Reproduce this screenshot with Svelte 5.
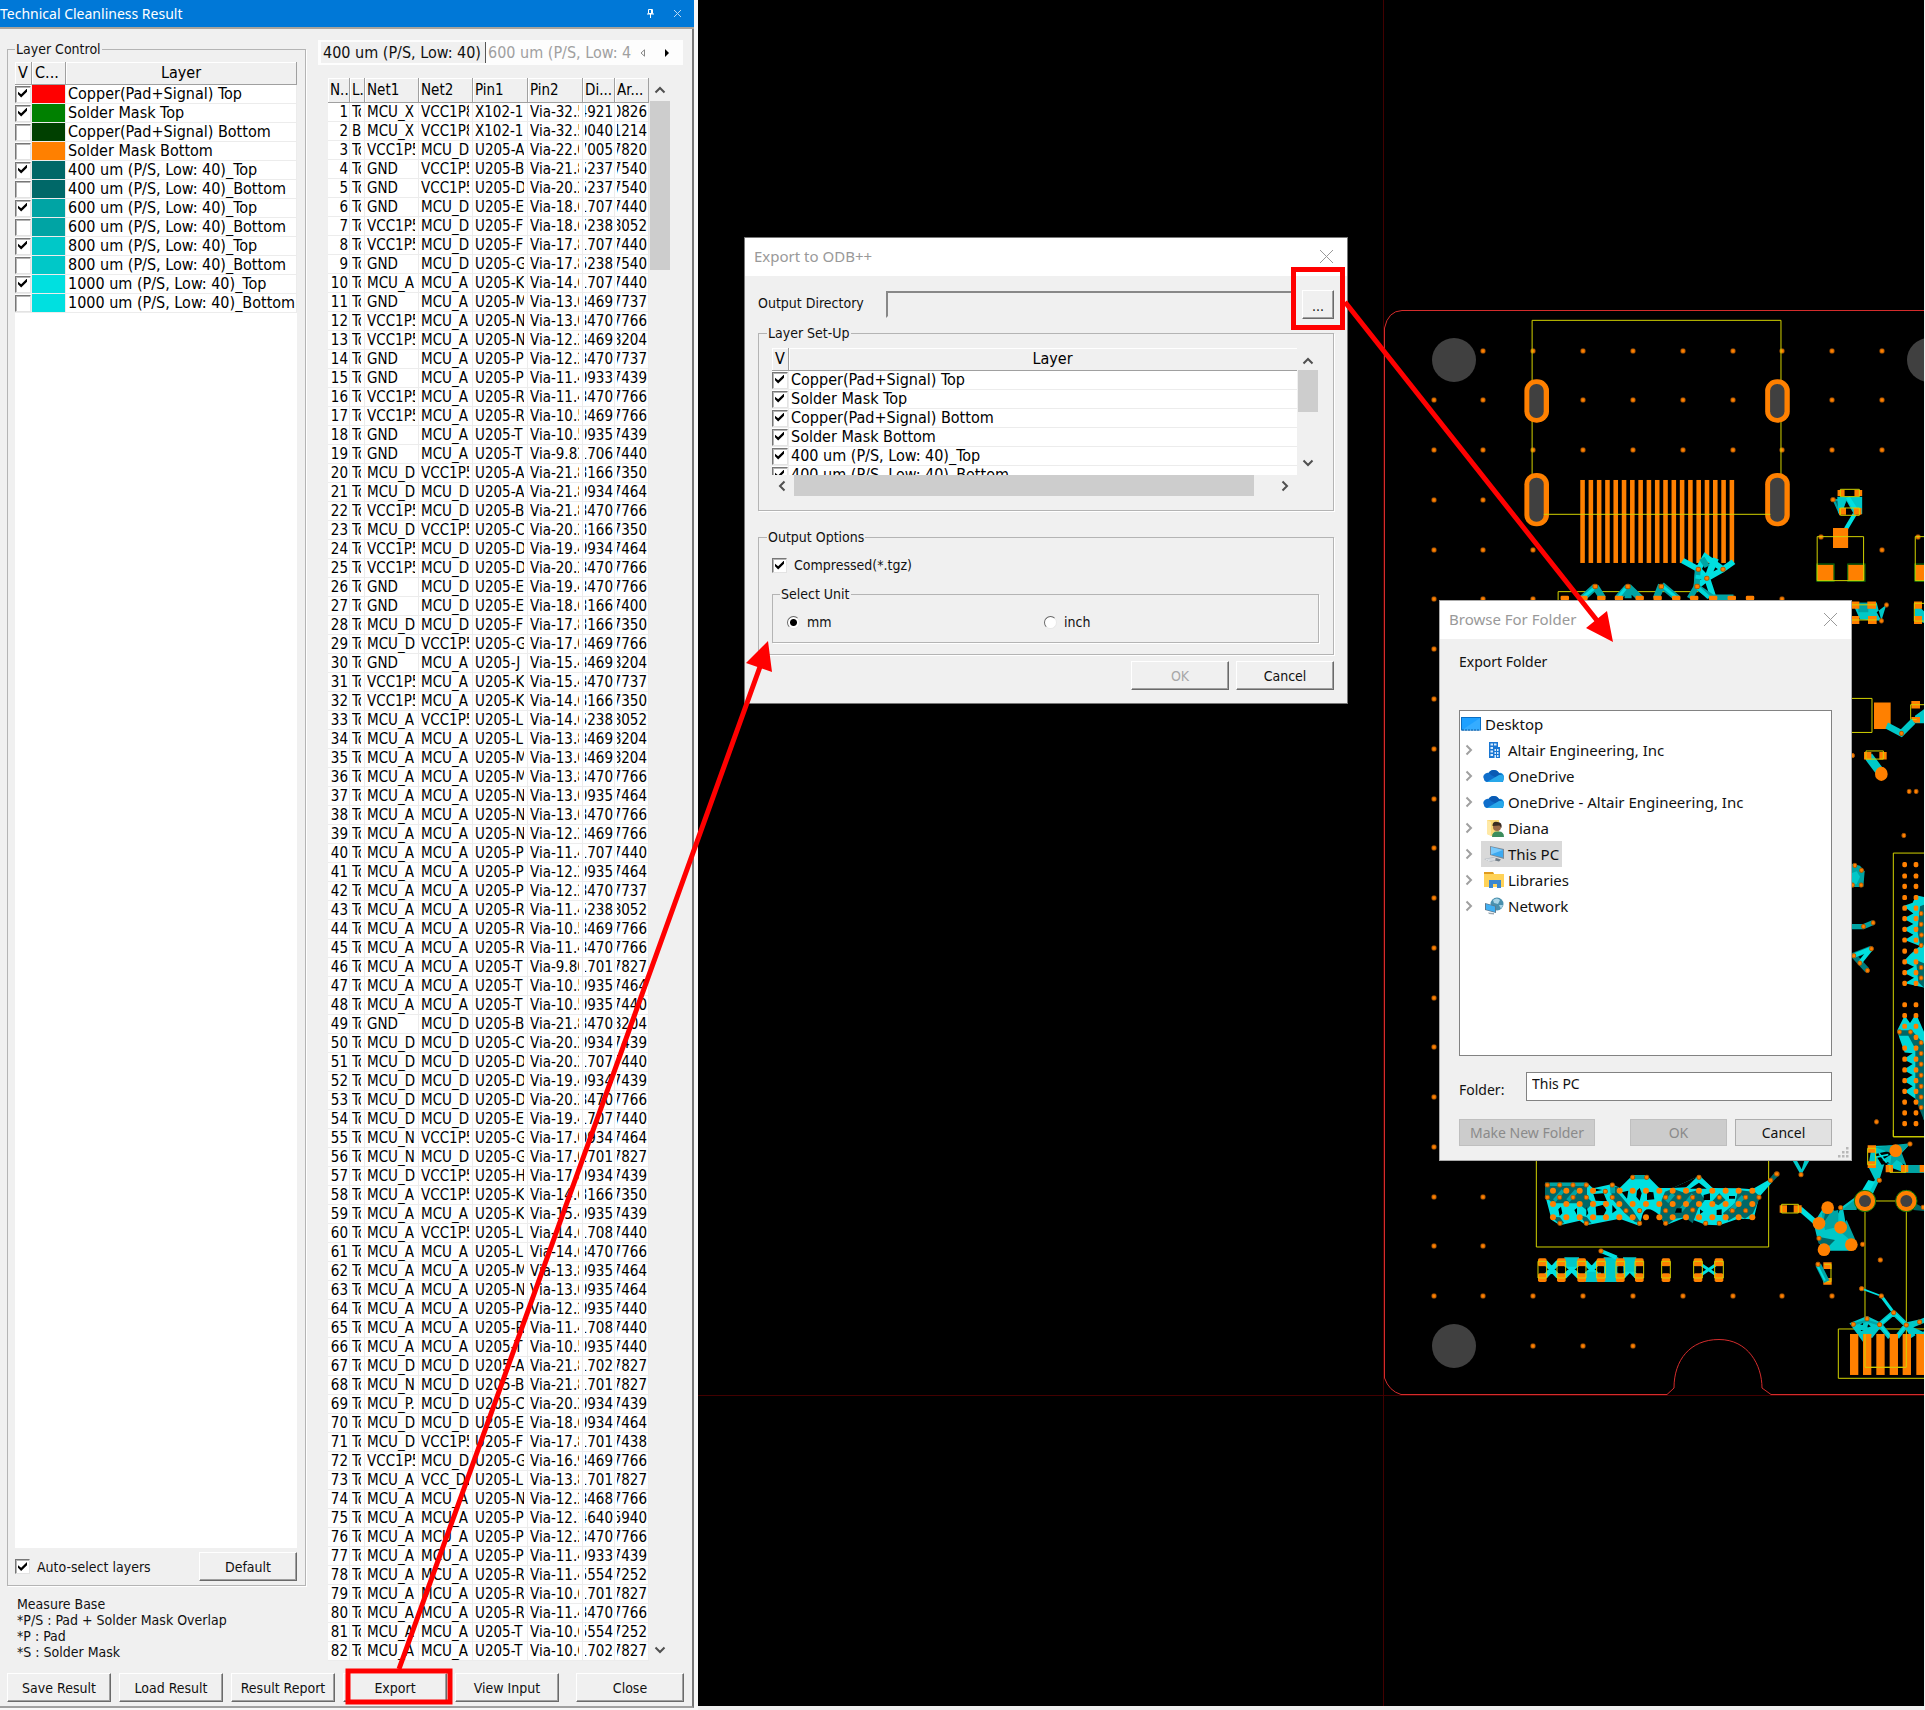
<script>
  const layers = [
    ['Copper(Pad+Signal) Top', '#ff0000', true],
    ['Solder Mask Top', '#008000', true],
    ['Copper(Pad+Signal) Bottom', '#004000', false],
    ['Solder Mask Bottom', '#ff8000', false],
    ['400 um (P/S, Low: 40)_Top', '#006868', true],
    ['400 um (P/S, Low: 40)_Bottom', '#006868', false],
    ['600 um (P/S, Low: 40)_Top', '#00a4a4', true],
    ['600 um (P/S, Low: 40)_Bottom', '#00a4a4', false],
    ['800 um (P/S, Low: 40)_Top', '#00c8c8', true],
    ['800 um (P/S, Low: 40)_Bottom', '#00c8c8', false],
    ['1000 um (P/S, Low: 40)_Top', '#00e0e0', true],
    ['1000 um (P/S, Low: 40)_Bottom', '#00e0e0', false]
  ];
  const exportLayers = layers.slice(0, 6).map((l) => l[0]);

  const nets = {
    X: 'MCU_X', A: 'MCU_A', D: 'MCU_D', N: 'MCU_N', P: 'MCU_P.',
    V: 'VCC1P5', W: 'VCC1P8', C: 'VCC_DD', G: 'GND'
  };
  // side, net1, net2, pin1, via x, distance, area
  const raw = `T X W X102-1 32.5 4921 0826|B X W X102-1 32.5 0040 1214|T V D A 22.0 7005 7820|T G V B 21.8 5237 7540
T G V D 20.2 5237 7540|T G D E 18.6 1707 7440|T V D F 18.6 5238 8052|T V D F 17.8 1707 7440|T G D G 17.8 5238 7540
T A A K 14.6 1707 7440|T G A M 13.0 3469 7737|T V A N 13.0 3470 7766|T V A N 12.2 3469 8204|T G A P 12.2 3470 7737
T G A P 11.4 0933 7439|T V A R 11.4 3470 7766|T V A R 10.5 3469 7766|T G A T 10.5 0935 7439|T G A T 9.82 1706 7440
T D V A 21.8 3166 7350|T D D A 21.8 0934 7464|T V D B 21.8 3470 7766|T D V C 20.2 3166 7350|T V D D 19.4 0934 7464
T V D D 20.2 3470 7766|T G D E 19.4 3470 7766|T G D E 18.6 3166 7400|T D D F 17.8 3166 7350|T D V G 17.0 3469 7766
T G A J 15.4 3469 8204|T V A K 15.4 3470 7737|T V A K 14.6 3166 7350|T A V L 14.6 5238 8052|T A A L 13.8 3469 8204
T A A M 13.0 3469 8204|T A A M 13.8 3470 7766|T A A N 13.0 0935 7464|T A A N 13.0 3470 7766|T A A N 12.2 3469 7766
T A A P 11.4 1707 7440|T A A P 12.2 0935 7464|T A A P 12.2 3470 7737|T A A R 11.4 5238 8052|T A A R 10.5 3469 7766
T A A R 11.4 3470 7766|T A A T 9.80 1701 7827|T A A T 10.5 0935 7464|T A A T 10.5 0935 7440|T G D B 21.8 3470 8204
T D D C 20.2 0934 7439|T D D D 20.2 1707 7440|T D D D 19.4 0934 7439|T D D D 20.2 3470 7766|T D D E 19.4 1707 7440
T N V G 17.0 0934 7464|T N D G 17.0 1701 7827|T D V H 17.0 0934 7439|T A V K 14.6 3166 7350|T A A K 15.4 0935 7439
T A V L 14.6 1708 7440|T A A L 14.6 3470 7766|T A A M 13.8 0935 7464|T A A N 13.0 0935 7464|T A A P 12.2 0935 7440
T A A R 11.4 1708 7440|T A A T 10.5 0935 7440|T D D A 21.8 1702 7827|T N D B 21.8 1701 7827|T P D C 20.2 0934 7439
T D D E 18.6 0934 7464|T D V F 17.8 1701 7438|T V D G 16.9 3469 7766|T A C L 13.8 1701 7827|T A A N 12.2 3468 7766
T A A P 12.1 4640 5940|T A A P 12.2 3470 7766|T A A P 11.4 0933 7439|T A A R 11.4 5554 7252|T A A R 10.6 1701 7827
T A A R 11.4 3470 7766|T A A T 10.6 5554 7252|T A A T 10.6 1702 7827`;
  const results = raw.split(/[|\n]/).map((line, i) => {
    const [side, n1, n2, pin, via, di, ar] = line.trim().split(' ');
    return [i + 1, side === 'T' ? 'Top' : 'Bot', nets[n1], nets[n2],
      pin.length === 1 ? `U205-${pin}` : pin, `Via-${via}`, di, ar];
  });
  const columns = ['N...', 'L...', 'Net1', 'Net2', 'Pin1', 'Pin2', 'Di...', 'Ar...'];

  const notes = ['Measure Base', '*P/S : Pad + Solder Mask Overlap', '*P : Pad', '*S : Solder Mask'];
  const actions = ['Save Result', 'Load Result', 'Result Report', 'Export', 'View Input', 'Close'];

  const tree = [
    ['Altair Engineering, Inc', 'building'],
    ['OneDrive', 'cloud'],
    ['OneDrive - Altair Engineering, Inc', 'cloud'],
    ['Diana', 'user'],
    ['This PC', 'pc'],
    ['Libraries', 'library'],
    ['Network', 'network']
  ];

  // board geometry
  const row = (y, xs) => xs.map((x) => [x, y]);
  const gridX = [1434, 1483, 1533, 1583, 1633, 1683, 1733, 1782, 1832, 1882];
  const vias = [
    ...row(351, gridX.slice(1)),
    ...row(400, [1434, 1483, 1583, 1633, 1683, 1733, 1832, 1882]),
    ...row(450, gridX),
    ...row(500, [1434, 1483]),
    ...row(550, [1434, 1483, 1533, 1882]),
    ...row(599, [1434, 1483, 1533, 1782]),
    ...[649, 699, 749, 799, 848, 898, 948, 998, 1047, 1097, 1147].map((y) => [1434, y]),
    ...row(1197, [1434, 1483]),
    ...row(1246, [1434, 1483]),
    ...row(1296, [1434, 1483, 1533, 1583, 1633, 1683, 1733, 1782, 1832]),
    ...row(1346, [1533, 1583, 1633]),
    [1821, 537], [1918, 537], [1777, 1174]
  ];
  const fingers = Array.from({ length: 19 }, (_, i) => 584 + i * 23.6);
  const bgaRows = [
    [92, [84, 124, 164, 204, 284, 323, 363, 403, 443, 483, 522, 562, 602, 641, 682]],
    [132, [84, 124, 164, 204, 243, 283, 323, 363, 403, 443, 483, 522, 562, 602, 641, 682]],
    [172, [84, 124, 164, 204, 243, 283, 323, 363, 403, 443, 483, 522, 562, 602, 641, 682]]
  ];
  const bga = bgaRows.flatMap(([y, xs]) => row(y, xs));
  const bgaVias = [
    [67, 75], [104, 75], [144, 75], [184, 75], [67, 112], [104, 112], [144, 112], [184, 112],
    [262, 75], [262, 112], [241, 94], [323, 52], [365, 52], [522, 52], [737, 61], [755, 42],
    [303, 152], [344, 152], [344, 190], [105, 190], [184, 190], [422, 112], [462, 112], [503, 112],
    [422, 152], [503, 150], [422, 190], [542, 190], [583, 190], [583, 112], [662, 112], [702, 112],
    [622, 152], [662, 152]
  ];
  const caps = [52, 109, 170, 228, 286, 343, 423, 519, 582];
  const edgePads = [742, 773, 801, 831, 860, 888, 917, 946, 976, 1005, 1034, 1063, 1121, 1150, 1179, 1209,
    1238, 1268, 1297, 1326, 1355, 1384, 1413, 1442].flatMap((y) => (y === 1209 ? [[228, y]] : [[194, y], [228, y]]));
  const edgeVias = [[243, 874], [243, 903], [244, 932], [243, 960], [243, 1020], [243, 1048], [178, 1194], [211, 1194],
    [243, 1223], [243, 1252], [243, 1281], [243, 1311], [243, 1341], [243, 1370], [243, 1398],
    [207, 544], [228, 544], [191, 663], [109, 1437], [139, 40], [124, 83], [184, 387],
    [44, 744], [64, 757], [63, 797], [37, 797], [70, 909], [99, 899], [94, 969], [41, 988], [59, 1008], [82, 1028], [37, 447]];
</script>

<div class="app">
  <section class="panel">
    <header class="titlebar">
      <h1>Technical Cleanliness Result</h1>
      <button aria-label="Pin">
        <svg width="9" height="9" viewBox="0 0 9 9"><path d="M2.5 .5h4v4h-4zM5.5 0v5M1 5h7M4.5 5v4" fill="none" stroke="#fff" /></svg>
      </button>
      <button aria-label="Close panel">
        <svg width="9" height="9" viewBox="0 0 9 9"><path d="M1 1l7 7M8 1l-7 7" fill="none" stroke="#b9d9f5" /></svg>
      </button>
    </header>

    <div class="body">
      <div class="columns">
        <div class="left">
          <fieldset class="layer-control">
            <legend>Layer Control</legend>
            <div class="layer-list">
              <table class="grid">
                <colgroup><col class="c-v" /><col class="c-c" /><col /></colgroup>
                <thead><tr><th>V</th><th>C...</th><th class="center">Layer</th></tr></thead>
                <tbody>
                  {#each layers as [name, color, on], i}
                    <tr>
                      <td class="tick"><input type="checkbox" id="layer-{i}" checked={on} /></td>
                      <td class="swatch" style="background:{color}"></td>
                      <td><label for="layer-{i}">{name}</label></td>
                    </tr>
                  {/each}
                </tbody>
              </table>
            </div>
            <div class="layer-foot">
              <label class="check"><input type="checkbox" checked />Auto-select layers</label>
              <button class="btn default">Default</button>
            </div>
          </fieldset>
          <div class="notes">
            {#each notes as n}<p>{n}</p>{/each}
          </div>
        </div>

        <div class="right">
          <div class="tabs">
            <button class="tab on">400 um (P/S, Low: 40)</button>
            <button class="tab off">600 um (P/S, Low: 40)</button>
            <button class="arrow" aria-label="Previous tab"><svg width="6" height="8" viewBox="0 0 6 8"><path d="M4.500 .8v6.400L1 4z" fill="none" stroke="#888" /></svg></button>
            <button class="arrow" aria-label="Next tab"><svg width="6" height="8" viewBox="0 0 6 8"><path d="M1 0v8l4-4z" /></svg></button>
          </div>
          <div class="result-area">
            <table class="grid results">
              <colgroup>
                <col class="w22" /><col class="w15" /><col class="w54" /><col class="w54" />
                <col class="w55" /><col class="w55" /><col class="w32" /><col class="w34" />
              </colgroup>
              <thead><tr>{#each columns as c}<th><span>{c}</span></th>{/each}</tr></thead>
              <tbody>
                {#each results as r}
                  <tr>
                    {#each r as cell, i}
                      <td class:num={i === 0 || i > 5}><span>{cell}</span></td>
                    {/each}
                  </tr>
                {/each}
              </tbody>
            </table>
            <div class="vscroll tall">
              <svg width="12" height="8" viewBox="0 0 12 8"><path d="M1.500 6.500L6 2l4.500 4.500" /></svg>
              <i></i>
              <svg width="12" height="8" viewBox="0 0 12 8"><path d="M1.500 1.500L6 6l4.500-4.500" /></svg>
            </div>
          </div>
        </div>
      </div>
      <footer class="actions">
        {#each actions as a}<button class="btn" class:wide={a === 'Close'}>{a}</button>{/each}
      </footer>
    </div>
  </section>

  <main class="canvas">
    <svg class="board" viewBox="698 0 1226 1706" preserveAspectRatio="xMinYMin slice" aria-hidden="true">
      <g fill="none" stroke-width="1">
        <path d="M1383.500 0V1706M698 1395.500H1925" stroke="#420000" />
        <path d="M1925 310.500H1402Q1388 311 1384.500 328V1378Q1389 1391 1401 1394.500H1667L1674 1388C1674 1360 1690 1339.500 1719 1339.500S1762 1365 1762 1388L1771 1394.500H1925" stroke="#d42c2c" />
      </g>
      <g fill="#404040">
        <circle cx="1454" cy="360" r="22" /><circle cx="1929" cy="360" r="22" /><circle cx="1454" cy="1346" r="22" />
      </g>
      {#each vias as [x, y]}<rect class="via" x={x - 2} y={y - 2} width="4" height="4" rx="1" />{/each}

      <!-- upper connector -->
      <g transform="translate(1375 300) scale(.3515 .3333)">
        <path d="M447 535V61H1155V535" class="yl" />
        {#each [[425, 238, 368], [1110, 238, 368], [425, 519, 679], [1110, 519, 679]] as [x, y, b]}
          <rect {x} {y} width="70" height={b - y} rx="34" fill="#ff8000" />
          <rect x={x + 14} y={y + 14} width="41" height={b - y - 28} rx="20" fill="#404040" />
        {/each}
        {#each fingers as x}<rect {x} y="540" width="13" height="249" fill="#ff8000" />{/each}
        <path d="M480 643H1125M521 900V875H920" class="yl" />
        <path d="M875 782L920 808L940 770L990 808L1020 785M920 808L915 860L945 835L990 808M945 835L962 890M965 775L945 835M920 808L945 835L970 775" stroke="#00e0e0" stroke-width="17" fill="none" />
        <path d="M915 860L895 895M915 860L960 893M960 892H1020M918 810L915 860M930 775L945 800" stroke="#00a4a4" stroke-width="17" fill="none" />
        <path d="M915 860L950 893M912 830L945 835" stroke="#00d8d8" stroke-width="12" fill="none" />
        <path d="M627 860L590 895M627 860L648 895M720 860L690 895M720 860L755 895M720 860V895M815 855L800 895M815 855L860 895" stroke="#00a4a4" stroke-width="20" fill="none" />
        <path d="M622 866L588 895M712 866L690 895M820 860L860 895" stroke="#00e0e0" stroke-width="9" fill="none" />
        {#each [627, 720, 815, 917] as x}<rect x={x - 7} y="853" width="13" height="13" rx="4" class="via" />{/each}
        {#each [[920, 808], [990, 808], [944, 835]] as [x, y]}<rect x={x - 6} y={y - 6} width="12" height="12" rx="4" class="via" />{/each}
        {#each [540, 593, 644, 694, 753, 804, 857, 908, 962, 1015, 1067] as x}<rect x={x - 12} y="887" width="24" height="14" rx="4" fill="#ff8000" />{/each}
        <!-- small parts to the right -->
        <path d="M1305 600L1322 640L1340 600Z" fill="#006868" stroke="#00a4a4" stroke-width="6" />
        <path d="M1315 590H1386V642H1362L1340 600L1330 640H1318Z" fill="#00c8c8" />
        <path d="M1345 592L1368 630M1365 642L1340 686" stroke="#00e0e0" stroke-width="12" />
        <path d="M1316 570h20v18h-20zM1364 570h22v18h-22zM1320 624h20v20h-20zM1362 624h22v20h-22zM1303 684h43v60h-43zM1257 794h48v48h-48zM1345 794h48v48h-48zM1537 794h30v48h-30z" fill="#ff8000" />
        <path d="M1257 792h49v52h-49zM1345 792h49v52h-49zM1536 792h40v52h-40z" fill="none" stroke="#0a7a0a" stroke-width="3" />
        <path d="M1324 568H1378V590H1324ZM1324 624H1378V646H1324ZM1258 710H1390V842H1258ZM1570 710H1537V842H1570" class="yl" />
        <rect x="1297" y="593" width="12" height="12" rx="4" class="via" />
      </g>

      <!-- right edge parts -->
      <g transform="translate(1840 590) scale(.3333 .37)">
        <path d="M40 40L110 34L124 83L60 80ZM124 83L139 40L110 60" fill="#00c8c8" />
        <path d="M225 340L255 320V360H225ZM225 34L255 60V90L225 80ZM235 320L255 340" fill="#00c8c8" />
        <path d="M55 34H85V60H55Z" fill="#00a4a4" />
        <path d="M36 31h22v20h-22zM82 31h26v20h-26zM36 70h22v22h-22zM84 70h26v22h-26zM222 31h24v20h-24zM222 70h24v22h-24zM102 304h50v72h-50zM214 300h26v20h-26zM214 343h26v16h-26z" fill="#ff8000" />
        <path d="M36 40H110M36 81H110M255 36H223V84H255M36 293H96V385H36M255 310H212V350H230" class="yl" />
        <path d="M140 366L184 387L220 355" fill="none" stroke="#00c8c8" stroke-width="18" />
        <path d="M86 450L124 496" stroke="#00c8c8" stroke-width="26" />
        <circle cx="124" cy="497" r="19" fill="#ff8000" />
        <path d="M72 438h22v20h-22zM118 438h22v20h-22z" fill="#ff8000" /><path d="M78 435H130V457H78Z" class="yl" />
        <path d="M36 740L60 745L74 760L70 803H36Z" fill="#00a4a4" /><path d="M36 765L50 760L60 775L50 795H36" fill="#00c8c8" />
        <path d="M36 910H70L99 899" fill="none" stroke="#00a4a4" stroke-width="14" />
        <path d="M94 969L41 988L82 1028" fill="none" stroke="#007c7c" stroke-width="16" /><path d="M94 969L42 988M94 969L59 1008" stroke="#00e0e0" stroke-width="12" />
        <path d="M255 711H160V1478H255" class="yl" />
        <path d="M228 825L218 845L190 854L220 874L190 888L220 903L190 917L220 932L194 946L240 962L210 985L190 1005L222 1018L190 1034L222 1048L194 1063L255 1075V830Z" fill="#00d8d8" />
        <path d="M194 1150L172 1190L178 1210L194 1250L218 1252L190 1268L218 1281L190 1297L218 1311L190 1326L218 1341L194 1355L240 1384L255 1445V1200L228 1145L210 1170Z" fill="#00d8d8" />
        <path d="M240 855L255 850V960H240L232 920ZM228 1000L255 1010V1078L235 1060ZM178 1190H215L255 1230V1440L226 1375V1240L205 1205H178Z" fill="#006868" />
        {#each edgePads as [x, y]}<rect x={x - 7} y={y - 7} width="14" height="14" rx="5" fill="#ff8000" />{/each}
        {#each edgeVias as [x, y]}<rect class="via" x={x - 5} y={y - 5} width="11" height="11" rx="4" />{/each}
      </g>

      <!-- ball grid array and capacitors -->
      <g transform="translate(1525 1160) scale(.3333)">
        <path d="M34 0V261H731V0" class="yl" />
        <path d="M60 68H186L204 85L262 72L284 84L323 46H365L403 84L443 84L522 48L562 84L641 85L682 88L737 56L742 66L702 112L686 178L640 176L583 196L542 194L483 172L422 196L403 165Q363 130 352 165L344 198L284 176L184 196L164 182L105 196L80 180L62 112Z" fill="#00e0e0" />
        <path d="M60 68H186V112L204 128L184 150L160 130H84L60 110ZM164 165L186 172L200 190H180ZM80 170L105 172L118 190H100ZM256 80H280V100L323 150L348 190L330 186L300 160L262 118ZM420 95L443 86L483 100L520 90L540 120L520 145L503 190L480 172L450 176L425 196L405 170L410 120ZM583 100L602 120L580 136L560 126ZM640 90L690 96L706 110L684 160L660 176L640 165L610 182L594 160L630 130ZM735 55L750 36L760 48L742 66Z" fill="#006868" />
        <path d="M75 68H184L176 78H75ZM84 118L110 88L118 96L92 126ZM124 118L150 88L160 96L134 126ZM323 46H365V58H323ZM256 80H270V100H256ZM420 120L440 98L450 106L430 130ZM460 150L500 100L510 110L470 158ZM610 150L650 105L660 115L620 160Z" fill="#00a4a4" />
        <path d="M100 148L108 140L112 160L104 168ZM148 150L156 144V165ZM184 140L190 160L184 168ZM212 140L235 134L244 150L236 166H214ZM262 135L275 150L262 160ZM336 92L344 84L350 100L344 122L334 110ZM366 95L385 97L388 118L366 120ZM212 86L232 90L212 94ZM205 102L236 100L246 124L212 122ZM290 97L310 92L306 116ZM455 145L470 145L470 158L450 158ZM536 105L555 100V120H536ZM495 86L522 68L545 86ZM575 150L590 148L590 165H575ZM612 108H630V116H612ZM525 148L535 155L525 162ZM443 84L522 48L495 76L483 82Z" fill="#000" />
        <path d="M483 90L522 52L562 90" fill="none" stroke="#00e0e0" stroke-width="10" />
        {#each bga as [x, y]}<circle cx={x} cy={y} r="9" fill="#ff8000" />{/each}
        {#each bgaVias as [x, y]}<rect class="via" x={x - 6} y={y - 6} width="12" height="12" rx="4" />{/each}

        <path d="M60 306L100 350M100 306L60 350M118 306L162 350M162 306L118 350M180 306L220 350M220 306L180 350M294 306L335 350M335 306L294 350" stroke="#00e0e0" stroke-width="15" />
        <path d="M526 312L576 346M576 312L526 346" stroke="#00e0e0" stroke-width="9" />
        <path d="M118 292H162V320H118ZM180 335H228V366H180ZM236 292H280V366H236ZM294 292H334V335H294Z" fill="#00c8c8" />
        <path d="M228 273L275 293" stroke="#00e0e0" stroke-width="12" />
        {#each caps as x}
          <rect x={x - 13} y="295" width="26" height="24" rx="5" fill="#ff8000" />
          <rect x={x - 13} y="340" width="26" height="26" rx="5" fill="#ff8000" />
          <path d="M{x - 9} 320V338H{x + 9}V320Z" fill="#000" />
          <path d="M{x - 13} 304H{x + 13}V354H{x - 13}Z" class="yl" />
        {/each}
        <rect class="via" x="222" y="267" width="12" height="12" rx="4" />
      </g>

      <!-- lower right parts -->
      <g transform="translate(1775 1130) scale(.3333)">
        <path d="M52 90L78 136L103 92H88L80 118L66 92Z" fill="#00c8c8" />
        <path d="M355 0V20H450" class="yl" />
        <path d="M75 236L120 275" stroke="#00e0e0" stroke-width="16" />
        <path d="M290 48L360 46L405 42L375 75L385 108H450V128H390L345 112L330 95L313 151L285 210H245L205 240L212 280L244 345L230 362H145L128 330L116 280L150 225L190 250L197 233L270 180L300 150L280 110Z" fill="#00c8c8" />
        <path d="M300 72L345 62L350 72L322 90L345 100L320 104Z" fill="#000" />
        <path d="M300 82L340 74M312 70L335 98" stroke="#00e0e0" stroke-width="5" />
        <path d="M300 52L405 40L380 68L395 108L365 90L345 110L350 70ZM200 240L245 205V240ZM215 270L248 345L225 330L190 300ZM140 250L190 240V290L150 300ZM390 105H450V128H400Z" fill="#00a4a4" />
        <path d="M130 320L180 330L160 350L130 340ZM150 250L168 245L145 280Z" fill="#006868" />
        <path d="M280 150L300 155L285 182L262 180Z" fill="#00e0e0" />
        <path d="M420 220L450 235V243L415 240Z" fill="#006868" />
        <path d="M270 213H394V712H270ZM450 597H190V745H450" class="yl" />
        {#each [270, 394] as x}<circle cx={x} cy="213" r="32" fill="#ff8000" stroke="#0a7a0a" stroke-width="3" /><circle cx={x} cy="213" r="18" fill="#404040" />{/each}
        {#each [[362, 62], [158, 233], [132, 280], [197, 292], [229, 344], [147, 359]] as [x, y]}<circle cx={x} cy={y} r="19" fill="#ff8000" />{/each}
        <path d="M278 46h25v22h-25zM278 94h25v20h-25zM332 105h22v22h-22zM378 105h22v22h-22zM434 105h16v22h-16zM14 226h22v22h-22zM56 226h24v22h-24zM145 397h25v20h-25zM145 444h25v20h-25z" fill="#ff8000" />
        <path d="M278 55H302V104H278ZM345 105V127H392V105M20 223H70V249H20ZM168 403V455H145M148 403H168" class="yl" />
        <path d="M130 405L155 455" stroke="#00a4a4" stroke-width="18" /><path d="M128 408L150 452" stroke="#00e0e0" stroke-width="6" />
        <path d="M260 476L319 498" stroke="#00e0e0" stroke-width="5" />
        <path d="M319 498L356 548" stroke="#00e0e0" stroke-width="9" />
        <path d="M356 548L394 585L434 576M356 548L314 584L276 566L235 583L262 620L276 566M314 584L285 620M314 584L345 622M394 585L366 622M394 585L415 620M450 570L400 590M450 610L430 625M242 585L290 605M314 584L262 610M394 590L440 612M300 590L276 570" fill="none" stroke="#00c8c8" stroke-width="15" />
        <path d="M235 583L276 572L314 584" fill="none" stroke="#00a4a4" stroke-width="7" />
        <path d="M314 584L345 620M394 585L366 620M356 548L394 585M356 548L314 584" fill="none" stroke="#00e0e0" stroke-width="6" />
        {#each [225, 264, 304, 344, 383, 424] as x}<rect {x} y="612" width="25" height="123" fill="#ff8000" />{/each}
        <path d="M270 612V712H394V612" class="yl" />
        {#each [[405, 42], [313, 151], [197, 233], [132, 325], [263, 343], [129, 403], [445, 232], [260, 476], [319, 498], [356, 548], [276, 566], [235, 583], [314, 584], [394, 585], [434, 576], [316, 390], [78, 134]] as [x, y]}
          <rect class="via" x={x - 6} y={y - 6} width="12" height="12" rx="4" />
        {/each}
      </g>
    </svg>

    <section class="dialog export">
      <header><h2>Export to ODB++</h2>
        <button aria-label="Close export"><svg width="15" height="15" viewBox="0 0 15 15"><path d="M1 1l13 13M14 1L1 14" fill="none" stroke="#999" /></svg></button>
      </header>
      <div class="ebody">
        <div class="dir"><label for="outdir">Output Directory</label><input id="outdir" type="text" readonly /><button class="btn">...</button></div>
        <fieldset class="setup">
          <legend>Layer Set-Up</legend>
          <div class="setup-grid">
            <div class="clip">
              <table class="grid">
                <colgroup><col class="c-v" /><col /></colgroup>
                <thead><tr><th>V</th><th class="center">Layer</th></tr></thead>
                <tbody>
                  {#each exportLayers as name, i}
                    <tr>
                      <td class="tick"><input type="checkbox" id="exp-{i}" checked /></td>
                      <td><label for="exp-{i}">{name}</label></td>
                    </tr>
                  {/each}
                </tbody>
              </table>
            </div>
            <div class="vscroll short">
              <svg width="12" height="8" viewBox="0 0 12 8"><path d="M1.500 6.500L6 2l4.500 4.500" /></svg>
              <i></i>
              <svg width="12" height="8" viewBox="0 0 12 8"><path d="M1.500 1.500L6 6l4.500-4.500" /></svg>
            </div>
            <div class="hscroll">
              <svg width="8" height="12" viewBox="0 0 8 12"><path d="M6.500 1.500L2 6l4.500 4.500" /></svg>
              <i></i>
              <svg width="8" height="12" viewBox="0 0 8 12"><path d="M1.500 1.500L6 6l-4.500 4.500" /></svg>
            </div>
          </div>
        </fieldset>
        <fieldset class="options">
          <legend>Output Options</legend>
          <label class="check"><input type="checkbox" checked />Compressed(*.tgz)</label>
          <fieldset class="unit">
            <legend>Select Unit</legend>
            <label class="check"><input type="radio" name="unit" checked />mm</label>
            <label class="check"><input type="radio" name="unit" />inch</label>
          </fieldset>
        </fieldset>
        <div class="buttons"><button class="btn" disabled>OK</button><button class="btn">Cancel</button></div>
      </div>
    </section>

    <section class="dialog browse">
      <header><h2>Browse For Folder</h2>
        <button aria-label="Close browse"><svg width="15" height="15" viewBox="0 0 15 15"><path d="M1 1l13 13M14 1L1 14" fill="none" stroke="#999" /></svg></button>
      </header>
      <div class="bbody">
        <p>Export Folder</p>
        <ul class="tree">
          <li class="root">
            <svg width="20" height="14" viewBox="0 0 20 14"><rect x=".5" y=".5" width="19" height="12.500" fill="#1ea0ff" stroke="#0b6fc4" /><path d="M1 13L19 1V13z" fill="#35acff" /><path d="M1 13h18" stroke="#0b5ea8" stroke-dasharray="2 1" /></svg>
            Desktop
          </li>
          {#each tree as [name, icon]}
            <li>
              <svg width="8" height="12" viewBox="0 0 8 12"><path d="M1.500 1.500L6 6l-4.500 4.500" fill="none" stroke="#a0a0a0" stroke-width="2" /></svg>
              <span class="node" class:selected={icon === 'pc'}>
                <svg width="22" height="18" viewBox="0 0 22 18">
                  {#if icon === 'building'}
                    <path d="M6 1h9v5h2v11H6z" fill="#1976d2" /><path d="M7.500 2.500h2.500v2H7.500zM11 2.500h2.500v2H11zM7.500 6h2.500v2H7.500zM7.500 9.500h2.500v2H7.500zM7.500 13h2.500v2H7.500zM11.500 8h1.500v2h-1.500zM14 8h1.500v2H14zM11.500 11h1.500v2h-1.500zM14 11h1.500v2H14zM11.500 14h1.500v3h-1.500zM14 14h1.500v2H14z" fill="#d7ebff" />
                  {:else if icon === 'cloud'}
                    <path d="M1 12a4 4 0 0 1 4-4.500A6 6 0 0 1 16 6a4 4 0 0 1 5 4l-1 5H4a3.500 3.500 0 0 1-3-3z" fill="#1490df" /><path d="M5 7.500A6 6 0 0 1 16 6L19 8 11 11z" fill="#0a5ab4" /><path d="M1 12a4 4 0 0 1 7-4l8 4-12 3a3.500 3.500 0 0 1-3-3z" fill="#0f6ecb" /><path d="M4 15L16 8a4 4 0 0 1 5 3q0 4-4 4z" fill="#28a8ea" />
                  {:else if icon === 'user'}
                    <path d="M4 1h12v14l-7 2-5-2z" fill="#fbd977" /><path d="M4 1l4 2v14l-4-2z" fill="#ffe9a6" /><circle cx="14" cy="8" r="4" fill="#9a6a48" /><path d="M9.500 7q0-5 5-4 5 0 4 6l-2-2.500z" fill="#3a2c22" /><path d="M9 18q0-6 6-5.500 6-.5 6 5.500z" fill="#3c8d5d" />
                  {:else if icon === 'pc'}
                    <path d="M7 1l14 3v10L7 10z" fill="#7b8b99" /><path d="M8 2l12 3v7.500L8 9.500z" fill="#3ba9f0" /><path d="M8 2l12 3-12 4.500z" fill="#79c9fb" /><path d="M1 14l9-2 6 2-8 3z" fill="#b5bcc3" /><path d="M3 14.500l9-1M5 15.500l8-1" stroke="#fff" stroke-width=".6" /><path d="M13 13l5 1.500-2 2-4-1z" fill="#6d7a85" />
                  {:else if icon === 'library'}
                    <path d="M1 1h9l1 2h10v13H1z" fill="#ffd257" /><path d="M1 1h9l1 2H1z" fill="#e09b1c" /><path d="M6 17V9h12v8h-4v-4h-4v4z" fill="#3a87d0" />
                  {:else}
                    <circle cx="14" cy="7" r="6.500" fill="#4a90ae" /><path d="M10 3q4-3 7 0l-2 4-4-1zM16 8l4 0-2 4z" fill="#a9d4e6" /><path d="M2 6l11 3v7L2 13z" fill="#5c7a90" /><path d="M3 7l9 2.500v5.500L3 12.500z" fill="#41b0f3" /><path d="M5 15.500l6 .5v1.500l-5-.5z" fill="#9aa7b0" />
                  {/if}
                </svg>
                {name}
              </span>
            </li>
          {/each}
        </ul>
        <div class="folder"><label for="folder">Folder:</label><input id="folder" type="text" value="This PC" /></div>
        <div class="bbuttons"><button disabled>Make New Folder</button><button disabled>OK</button><button>Cancel</button></div>
      </div>
      <svg class="grip" width="11" height="11" viewBox="0 0 11 11"><path d="M8 0h2.500v2.500H8zM4 4h2.500v2.500H4zM8 4h2.500v2.500H8zM0 8h2.500v2.500H0zM4 8h2.500v2.500H4zM8 8h2.500v2.500H8z" fill="#b8b8b8" /></svg>
    </section>
  </main>

  <svg class="callouts" width="1925" height="1710" viewBox="0 0 1925 1710" aria-hidden="true">
    <g fill="none" stroke="#ff0000" stroke-width="5">
      <path d="M399 1669L761 664M1345 302L1599 623" />
      <rect x="348" y="1671" width="102" height="31" />
      <rect x="1293.500" y="269.500" width="49" height="58" />
    </g>
    <path d="M768 641L746 663L772 672zM1613 642L1586 628L1607 611z" fill="#ff0000" />
  </svg>
</div>

<style>
  :global(body) { margin: 0; background: #f0f0f0; }
  .app {
    position: relative; display: flex; min-height: 100vh; overflow: hidden;
    font: 14px/16px "DejaVu Sans Condensed", "Noto Sans", sans-serif; color: #111; background: #f0f0f0;
  }
  button, input { font: inherit; color: inherit; margin: 0; padding: 0; }
  button { border: 0; background: none; }
  h1, h2, p, ul { margin: 0; padding: 0; font-weight: 400; }
  svg { display: block; flex: none; }

  .panel { box-sizing: border-box; width: 698px; flex: none; display: flex; flex-direction: column; padding-right: 4px; border-bottom: 2px solid #f8f8f8; background: #f8f8f8; }
  .titlebar { display: flex; align-items: center; gap: 18px; height: 27px; padding-right: 12px; background: #0078d7; color: #fff; border-bottom: 2px solid #a9a49c; }
  .titlebar h1 { flex: 1; font: 14px/20px "Noto Sans", "Open Sans", sans-serif; white-space: nowrap; }
  .body { flex: 1; display: flex; flex-direction: column; background: #f0f0f0; border-right: 2px solid #777; border-bottom: 2px solid #a0a0a0; }
  .columns { flex: 1; display: flex; gap: 12px; padding: 11px 9px 0 7px; }
  .left { width: 299px; display: flex; flex-direction: column; }

  fieldset { min-width: 0; margin: 0; border: 1px solid #b4b4b4; box-shadow: 1px 1px 0 #fff; }
  legend { padding: 0 1px; line-height: 18px; }
  .layer-control { flex: 1; display: flex; flex-direction: column; padding: 4px 8px 4px 7px; }
  .layer-list { flex: 1; background: #fff; }
  .layer-foot { display: flex; align-items: center; justify-content: space-between; padding-top: 4px; }
  .check { display: flex; align-items: center; gap: 7px; }
  .notes { padding: 10px 0 0 10px; height: 66px; }
  .notes p { line-height: 16px; }

  .btn {
    height: 29px; background: #f0f0f0; box-sizing: border-box; white-space: nowrap;
    border: 1px solid; border-color: #fff #6a6a6a #6a6a6a #fff; box-shadow: inset -1px -1px 0 #a0a0a0;
  }
  .btn:disabled { color: #a8a8a8; }
  .default { width: 98px; }

  .grid { width: 100%; border-collapse: separate; border-spacing: 0; table-layout: fixed; font-size: 16px; line-height: 18px; color: #000; }
  .grid th { height: 22px; padding: 0 0 0 3px; text-align: left; font-weight: 400; background: #f0f0f0; border-right: 1px solid #a0a0a0; border-bottom: 1px solid #a0a0a0; box-shadow: inset 1px 1px 0 #fff; overflow: hidden; white-space: nowrap; }
  .grid th.center { text-align: center; padding: 0; }
  .grid td { height: 18px; padding: 0 3px 0 2px; border-bottom: 1px solid #ececec; border-right: 1px solid #ececec; white-space: nowrap; overflow: hidden; background: #fff; }
  .grid td span, .grid th span { display: block; overflow: hidden; }
  .grid td.num { padding: 0 1px 0 2px; }
  .grid td.num span { display: flex; justify-content: flex-end; }
  .grid td.tick { padding: 0; }
  .c-v { width: 17px; }
  .c-c { width: 34px; }

  input[type='checkbox'] {
    appearance: none; display: block; flex: none; width: 15px; height: 15px; background: #fff; box-sizing: border-box;
    border: 1px solid; border-color: #777 #e3e3e3 #e3e3e3 #777; box-shadow: inset 1px 1px 0 #b5b5b5;
  }
  .tick input[type='checkbox'] { height: 17px; width: 16px; }
  input[type='checkbox']:checked::before {
    content: ''; display: block; width: 9px; height: 9px; margin: 2px 0 0 2px; background: #000;
    clip-path: polygon(0 35%, 35% 65%, 100% 0, 100% 35%, 35% 100%, 0 65%);
  }
  input[type='radio'] {
    appearance: none; display: block; flex: none; width: 13px; height: 13px; border-radius: 50%; background: #fff; box-sizing: border-box;
    border: 1px solid; border-color: #666 #e8e8e8 #e8e8e8 #666;
  }
  input[type='radio']:checked { background: radial-gradient(circle, #000 0 3px, #fff 4px); }

  .right { flex: 1; min-width: 0; }
  .tabs { display: flex; align-items: center; height: 25px; padding-left: 3px; background: #fdfdfd; font-size: 16px; line-height: 18px; }
  .tab { height: 21px; white-space: nowrap; text-align: left; }
  .tab.on { width: 165px; padding-left: 2px; background: #f0f0f0; border-right: 1px solid #555; box-sizing: border-box; }
  .tab.off { width: 146px; padding-left: 2px; overflow: hidden; color: #a0a0a0; }
  .arrow { margin-left: 8px; }
  .arrow + .arrow { margin-left: 18px; }
  .result-area { display: flex; padding: 13px 10px 0; }
  .results { width: 321px; flex: none; font-size: 15px; }
  .results th { padding: 0 0 0 2px; height: 24px; }
  .w22 { width: 22px; } .w15 { width: 15px; } .w54 { width: 54px; } .w55 { width: 55px; } .w32 { width: 32px; } .w34 { width: 34px; }

  .vscroll { width: 22px; display: flex; flex-direction: column; align-items: center; background: #f0f0f0; }
  .vscroll i, .hscroll i { display: block; background: #cdcdcd; }
  .vscroll i { width: 20px; margin: 7px 0 auto; }
  .tall { padding: 8px 0 7px; box-sizing: border-box; }
  .tall i { height: 169px; }
  .short { padding: 9px 0 8px; box-sizing: border-box; }
  .short i { height: 42px; margin-top: 5px; }
  .vscroll svg, .hscroll svg { fill: none; stroke: #505050; stroke-width: 2; }

  .actions { display: flex; gap: 8px; padding: 11px 8px 4px 7px; }
  .actions .btn { width: 104px; }
  .actions .btn.wide { width: 108px; margin-left: auto; }

  .canvas { position: relative; flex: 1; min-width: 0; background: #000; margin: 0 1px 4px 0; }
  .board { position: absolute; inset: 0; width: 100%; height: 100%; }
  .yl { fill: none; stroke: #d2d200; stroke-width: 1px; vector-effect: non-scaling-stroke; }
  .via { fill: #ff8000; stroke: #b05800; stroke-width: 1px; vector-effect: non-scaling-stroke; }
  .callouts { position: absolute; left: 0; top: 0; pointer-events: none; }

  .dialog { position: absolute; box-sizing: border-box; background: #f0f0f0; display: flex; flex-direction: column; }
  .dialog header { display: flex; align-items: center; justify-content: space-between; height: 36px; padding: 0 13px 2px 9px; background: #fff; color: #999; font: 15px/20px "Noto Sans", "Open Sans", sans-serif; }
  .dialog h2 { font-size: inherit; }
  .export { left: 46px; top: 237px; width: 604px; height: 467px; border: 1px solid #777; }
  .ebody { padding: 14px 13px 0; }
  .dir { display: flex; align-items: center; height: 29px; }
  .dir label { width: 128px; padding-bottom: 4px; }
  .dir input { flex: 1; min-width: 0; height: 27px; box-sizing: border-box; background: #f0f0f0; border: 2px solid; border-color: #888 #f0f0f0 #f0f0f0 #888; }
  .dir .btn { width: 32px; margin-left: 6px; padding-top: 3px; }
  .setup { margin-top: 5px; height: 187px; box-sizing: border-box; padding: 6px 14px 0 13px; }
  .setup legend, .options legend { margin-left: -5px; }
  .setup-grid { display: grid; grid-template-columns: 1fr 22px; grid-template-rows: 127px 21px; }
  .clip { overflow: hidden; }
  .clip .grid { width: calc(100% + 20px); }
  .hscroll { display: flex; align-items: center; padding: 0 8px 0 6px; }
  .hscroll i { width: 460px; height: 21px; margin: 0 auto 0 8px; }
  .options { margin-top: 17px; height: 127px; box-sizing: border-box; padding: 11px 14px 0 13px; }
  .unit { display: flex; height: 58px; margin-top: 12px; box-sizing: border-box; padding: 11px 12px 0 14px; align-items: flex-start; }
  .unit .check { width: 257px; }
  .unit legend { margin-left: -7px; }
  .buttons { display: flex; justify-content: flex-end; gap: 7px; padding-top: 6px; }
  .buttons .btn { width: 98px; }

  .browse { left: 741px; top: 600px; width: 413px; height: 561px; border: 1px solid #aaa; font-family: "Noto Sans", "Open Sans", sans-serif; }
  .bbody { padding: 14px 19px 0; font-size: 14px; line-height: 18px; }
  .tree { list-style: none; box-sizing: border-box; height: 346px; margin-top: 39px; padding: 0 1px; background: #fff; border: 1px solid #828282; font-size: 15px; line-height: 20px; }
  .tree li { display: flex; align-items: center; height: 26px; padding-left: 4px; gap: 8px; }
  .tree li.root { padding-left: 0; gap: 4px; }
  .node { display: flex; align-items: center; gap: 3px; height: 26px; padding: 0 3px 0 2px; }
  .node.selected { background: #d9d9d9; }
  .folder { display: flex; align-items: center; margin-top: 16px; }
  .folder label { width: 67px; padding-top: 6px; }
  .folder input { flex: 1; min-width: 0; height: 29px; box-sizing: border-box; padding: 0 5px 6px; background: #fff; border: 1px solid #828282; }
  .bbuttons { display: flex; gap: 8px; margin-top: 18px; }
  .bbuttons button { width: 97px; height: 27px; box-sizing: border-box; background: #e1e1e1; border: 1px solid #adadad; }
  .bbuttons button:first-child { width: 136px; margin-right: auto; }
  .bbuttons button:disabled { background: #ccc; border-color: #bfbfbf; color: #8a8a8a; }
  .grip { position: absolute; right: 2px; bottom: 2px; }
</style>
